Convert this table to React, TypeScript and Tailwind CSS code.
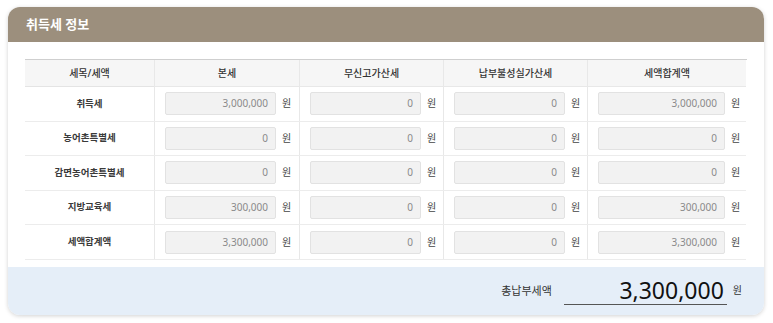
import React from "react"

interface TaxRow {
  label: string
  values: string[]
}

const rows: TaxRow[] = [
  { label: "취득세", values: ["3,000,000", "0", "0", "3,000,000"] },
  { label: "농어촌특별세", values: ["0", "0", "0", "0"] },
  { label: "감면농어촌특별세", values: ["0", "0", "0", "0"] },
  { label: "지방교육세", values: ["300,000", "0", "0", "300,000"] },
  { label: "세액합계액", values: ["3,300,000", "0", "0", "3,300,000"] },
]

const headers = ["세목/세액", "본세", "무신고가산세", "납부불성실가산세", "세액합계액"]

const font = { fontFamily: '"Noto Sans", "Noto Sans CJK KR", sans-serif' }

function AmountCell({ value, wide }: { value: string; wide?: boolean }) {
  return (
    <div className="flex items-center border-l border-[#e8e8e8] pl-[10px]">
      <div
        className={`h-[23px] ${wide ? "w-[127px]" : "w-[111px]"} flex items-center justify-end rounded-[2px] border border-[#e2e2e2] bg-[#f2f2f2] pr-[7px] text-[10px] text-[#8a8a8a]`}
      >
        {value}
      </div>
      <span className="ml-[6px] text-[10px] text-[#444]">원</span>
    </div>
  )
}

export default function App() {
  return (
    <div className="h-[323px] w-[773px] bg-white pl-[8px] pt-[7px]" style={font}>
      <div className="flex h-[308px] w-[756px] flex-col overflow-hidden rounded-[12px] bg-white shadow-[0_1px_4px_rgba(0,0,0,0.18)]">
        <div className="flex h-[35px] shrink-0 items-center bg-[#9c8f7d] pl-[18px]">
          <h2 className="text-[13px] font-bold text-white">취득세 정보</h2>
        </div>

        <div className="px-[17px] pt-[17px] pb-[7px]">
          <div className="grid grid-cols-[129px_145px_144px_144px_159px] border-t border-[#cfcfcf] text-[10px]">
            {headers.map((h, i) => (
              <div
                key={h}
                className={`flex h-[27px] items-center justify-center bg-[#f6f6f6] font-medium text-[#333] ${i > 0 ? "border-l border-[#e8e8e8]" : ""} border-b border-[#e4e4e4]`}
              >
                {h}
              </div>
            ))}
            {rows.map((row) => (
              <React.Fragment key={row.label}>
                <div className="flex h-[34.6px] items-center justify-center border-b border-[#ececec] text-[9.5px] font-bold text-[#3a3a3a]">
                  {row.label}
                </div>
                {row.values.map((v, i) => (
                  <div key={i} className="h-[34.6px] border-b border-[#ececec] flex">
                    <AmountCell value={v} wide={i === 3} />
                  </div>
                ))}
              </React.Fragment>
            ))}
          </div>
        </div>

        <div className="flex flex-1 items-center justify-end bg-[#e5eef8] pr-[22px]">
          <span className="mr-[12px] text-[11px] text-[#333]">총납부세액</span>
          <div className="flex h-[28px] w-[163px] items-center justify-end border-b border-[#555] pr-[3px] text-[23px] leading-none text-[#111]">
            3,300,000
          </div>
          <span className="ml-[6px] text-[10px] text-[#333]">원</span>
        </div>
      </div>
    </div>
  )
}
